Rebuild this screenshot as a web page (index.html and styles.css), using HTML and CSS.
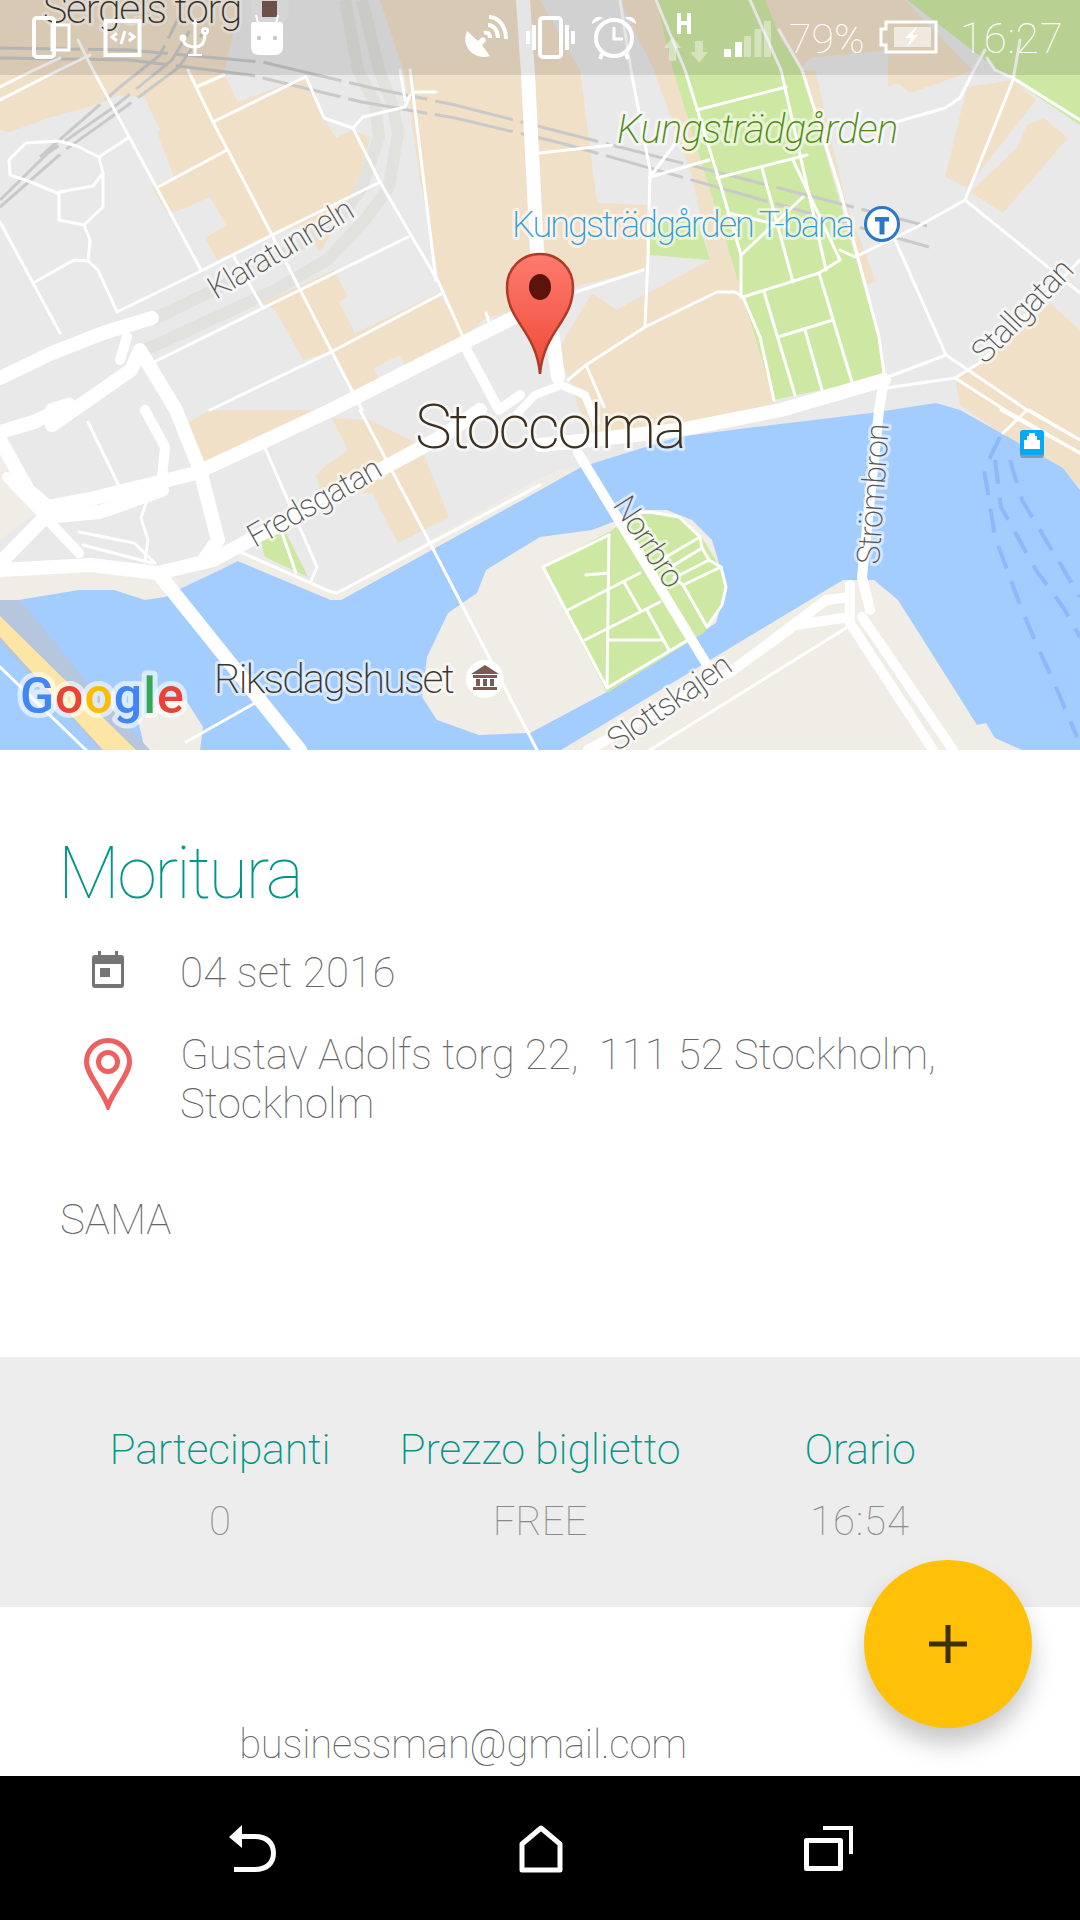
FILE: index.html
```html
<!DOCTYPE html>
<html lang="it">
<head>
<meta charset="utf-8">
<title>Moritura</title>
<link rel="stylesheet" href="styles.css">
</head>
<body>
<main class="screen">
  <section class="map">
    <svg class="map-art" viewBox="0 0 1080 750" width="1080" height="750">
      <defs>
        <linearGradient id="pinfill" x1="0" y1="0" x2="0" y2="1">
          <stop offset="0" stop-color="#fd7b6e"/>
          <stop offset="1" stop-color="#ee4a35"/>
        </linearGradient>
      </defs>
      <rect class="land" width="1080" height="750"/>
      <!-- buildings -->
      <g class="tan">
        <polygon points="0,0 240,0 224,75 133,72 145,98 120,95 96,105 48,118 10,132 0,130"/>
        <polygon points="133,70 189,70 224,75 238,102 305,77 325,120 336,138 353,130 370,137 362,170 344,213 320,252 300,225 272,235 217,260 205,238 226,225 210,197 181,210 167,213 152,187 174,177 165,153 157,132 160,130 145,98"/>
        <polygon points="262,303 334,270 348,297 339,302 355,333 439,293 463,337 406,368 399,355 374,368 380,382 355,393 331,352 303,360 275,310"/>
        <polygon points="184,425 196,468 344,410 210,410"/>
        <polygon points="332,418 348,450 329,463 316,475 320,490 372,493 398,543 449,517 420,445 370,420"/>
        <polygon points="380,0 540,0 580,70 597,203 648,205 650,255 643,270 574,287 540,300 510,312 486,318 463,337 440,283 420,180 405,75"/>
        <polygon points="540,0 656,0 673,70 743,297 710,260 692,177 654,70 620,0"/>
        <polygon points="556,353 592,293 616,310 710,260 741,290 775,403 680,432 590,445 570,380"/>
        <polygon points="802,70 815,70 846,203 876,282 865,285 840,190"/>
        <polygon points="750,0 905,0 972,70 953,78 910,93 898,83 888,87 888,50 810,58 800,70 778,63"/>
        <polygon points="967,87 1013,80 1036,100 967,188 945,177"/>
        <polygon points="1044,118 1068,138 1003,213 970,192 1017,148 1027,125"/>
        <polygon points="955,378 984,360 1022,330 1050,303 1080,330 1080,488 1063,468 1001,433 960,405"/>
      </g>
      <!-- park north -->
      <g class="park">
        <polygon points="656,0 765,0 781,40 802,70 881,347 884,373 853,383 822,390 797,395 774,400 743,297 673,70"/>
        <polygon points="650,222 698,220 710,260 650,255"/>
        <polygon points="907,0 1080,0 1080,125 998,70"/>
      </g>
      <!-- water and shores -->
      <polygon class="shore" points="0,440 30,490 48,505 0,540"/>
      <polygon class="shore" points="0,575 91,565 158,573 182,580 165,597 145,600 114,590 79,590 0,603"/>
      <polygon class="water" points="0,603 79,590 114,590 145,600 165,597 182,588 220,570 238,561 331,600 341,600 540,490 581,467 678,437 747,428 871,413 936,403 960,410 1001,433 1063,468 1080,490 1080,750 0,750"/>
      <polygon class="shore" points="238,550 331,590 341,590 540,478 560,470 581,467 540,490 341,600 331,600 238,561"/>
      <polygon class="shore" points="561,750 843,580 874,580 898,600 977,725 986,723 995,738 1022,750"/>
      <polygon class="shore" points="540,537 592,530 626,517 640,510 667,510 692,520 712,540 726,587 716,623 605,693 530,733 479,735 437,720 422,697 427,657 448,613 477,593 486,570"/>
      <polygon class="shore" points="138,720 165,700 186,700 203,727 200,750 145,750"/>
      <polygon class="highway-edge" points="0,600 20,600 85,680 150,750 0,750"/>
      <polygon class="water" points="0,642 100,750 0,750"/>
      <polygon class="highway" points="0,616 136,750 103,750 0,637"/>
      <!-- parks on the water side -->
      <polygon class="park-fill" points="542,567 609,532 638,512 678,517 702,538 722,570 726,587 722,607 705,632 607,693"/>
      <polygon class="park-fill" points="260,538 286,533 308,577 265,557"/>
      <!-- tunnel and rails -->
      <g class="tunnel">
        <polyline points="345,0 358,70 375,103 379,137 362,187 344,213 303,243 241,277 152,320"/>
        <polyline points="362,0 379,70 393,107 398,133 389,187 365,220 327,260 275,290 145,350"/>
      </g>
      <g class="rail">
        <polyline points="0,48 130,50 262,62 372,88 455,105 561,132 927,226"/>
        <polyline points="0,58 130,60 250,75 362,102 455,118 561,143 929,247"/>
        <polyline points="0,200 48,153 114,107 172,60 190,30"/>
        <polyline points="0,207 65,150 124,108 178,68 205,30"/>
        <polyline points="40,157 120,87 160,55 180,15"/>
      </g>
      <!-- large streets -->
      <g class="road-xl">
        <polyline points="523,0 528,75 537,250 548,300 558,377"/>
        <polyline points="0,378 52,353 103,333 152,318"/>
        <polyline points="52,425 131,370 140,350 176,410 200,470 218,540 205,558"/>
        <polyline points="0,432 34,422 69,405 52,410"/>
        <polyline points="523,313 463,343 331,410 196,473 86,500 48,507 28,490 0,440"/>
        <polyline points="0,563 45,517 100,512 162,490"/>
        <polyline points="0,570 91,565 158,573 213,560 441,437 480,410"/>
        <polyline points="540,445 590,440 679,430 781,410 884,380"/>
        <polyline points="158,573 300,750"/>
      </g>
      <g class="road-l">
        <polyline points="463,343 499,410 520,395"/>
        <polyline points="127,337 120,360"/>
        <polyline points="145,410 165,447 162,478"/>
        <polyline points="7,477 79,553"/>
        <polyline points="884,380 879,410 862,577 870,610"/>
        <polyline points="578,453 712,673"/>
        <polyline points="588,750 733,670 826,600 850,597"/>
        <polyline points="733,670 795,625 850,617"/>
        <polyline points="862,617 953,750"/>
        <polyline points="848,620 933,750"/>
        <polyline points="850,585 850,620"/>
      </g>
      <polyline class="ring" points="516,415 535,395 561,385 585,395 597,425"/>
      <!-- minor streets -->
      <g class="road">
        <polyline points="78,40 93,70 201,270"/>
        <polyline points="188,70 213,122 272,235 332,352 362,410"/>
        <polyline points="353,128 380,182 439,283 463,337"/>
        <polyline points="306,77 324,118 353,128 363,117 405,107 410,95"/>
        <polyline points="410,70 415,110 436,280"/>
        <polyline points="400,70 405,100"/>
        <polyline points="413,92 436,92"/>
        <polyline points="213,122 305,77"/>
        <polyline points="196,87 224,75"/>
        <polyline points="158,187 227,150"/>
        <polyline points="117,312 203,270 272,235 380,182"/>
        <polyline points="152,363 263,308 300,290 408,237"/>
        <polyline points="234,257 263,308"/>
        <polyline points="210,410 331,352 441,294"/>
        <polyline points="486,313 489,322"/>
        <polyline points="0,222 33,283 60,333"/>
        <polyline points="33,283 74,260 88,261 98,270 117,312"/>
        <polyline points="88,261 90,240 84,225 59,220 59,192 93,186 103,173 103,207 84,225"/>
        <polyline points="59,194 31,182 10,175 9,160 26,143 59,141 77,146 99,157 103,173"/>
        <polyline points="99,157 128,138"/>
        <polyline points="0,87 34,70 60,58"/>
        <polyline points="0,100 59,70 90,55"/>
        <polyline points="573,293 643,270"/>
        <polyline points="620,0 631,70 650,170 648,257 645,327"/>
        <polyline points="568,380 586,365 645,327 717,292 735,292 743,297 760,337 774,400"/>
        <polyline points="586,365 604,407"/>
        <polyline points="896,122 945,108 960,98 974,70 985,50"/>
        <polyline points="895,240 946,355"/>
        <polyline points="840,250 855,257 917,227 965,200 1013,80 1020,40"/>
        <polyline points="965,200 1080,293"/>
        <polyline points="946,355 888,377"/>
        <polyline points="946,355 1027,410 1080,440"/>
        <polyline points="886,388 955,378 1005,410 1080,453"/>
        <polyline points="955,378 981,362 1080,260"/>
        <polyline points="995,70 1013,78 1080,120"/>
        <polyline points="987,58 995,70"/>
        <polyline points="1027,410 1003,433"/>
        <polyline points="540,153 612,145"/>
        <polyline points="650,177 709,160"/>
        <polyline points="650,177 674,145"/>
        <polyline points="802,70 840,190 879,337 884,373"/>
        <polyline points="779,30 802,70"/>
        <polyline points="750,0 781,70"/>
        <polyline points="88,422 121,490"/>
        <polyline points="148,497 141,518 148,540 145,560"/>
        <polyline points="79,532 134,543 155,563"/>
        <polyline points="83,545 152,563"/>
        <polyline points="265,448 317,567 310,583"/>
        <polyline points="360,410 430,543 537,750"/>
        <polyline points="236,550 331,592 337,593 540,485"/>
        <polyline points="0,667 86,750"/>
        <polyline points="186,742 255,703"/>
        <polyline points="650,750 846,628"/>
        <polyline points="1001,410 1080,453"/>
        <polyline points="1029,410 1080,440"/>
      </g>
      <g class="park-paths">
        <polyline points="656,0 685,70 719,180 741,255 741,297"/>
        <polyline points="697,110 786,87"/>
        <polyline points="781,70 826,270"/>
        <polyline points="717,178 807,155"/>
        <polyline points="762,168 793,282"/>
        <polyline points="793,160 840,260"/>
        <polyline points="743,297 819,273 840,260"/>
        <polyline points="764,292 795,395"/>
        <polyline points="819,273 852,382"/>
        <polyline points="778,337 833,320"/>
        <polyline points="805,330 822,390"/>
        <polyline points="728,213 788,227"/>
        <polyline points="741,255 803,197"/>
        <polyline points="282,533 296,573"/>
        <polyline points="543,567 609,535"/>
        <polyline points="543,567 607,688 688,640"/>
        <polyline points="607,688 609,535"/>
        <polyline points="568,610 640,573"/>
        <polyline points="585,640 660,602"/>
        <polyline points="609,640 662,640"/>
        <polyline points="624,582 640,610"/>
        <polyline points="647,610 669,650"/>
        <polyline points="586,575 607,573"/>
        <polyline points="669,565 638,513 650,512 679,517 700,537 702,548 709,560 721,567 726,587 722,605 707,627 683,585 674,578"/>
        <polyline points="666,557 700,537"/>
        <polyline points="669,568 702,548"/>
        <polyline points="674,578 709,560"/>
        <polyline points="683,585 721,567"/>
      </g>
      <g class="ferry-route">
        <polyline points="1000,437 984,470 988,493 995,537 1022,610 1039,650 1053,680 1077,737"/>
        <polyline points="995,460 1001,507 1036,570 1063,607 1080,637"/>
        <polyline points="1010,460 1022,500 1080,597"/>
      </g>
      <!-- labels -->
      <text class="lbl lbl-sergels" x="43" y="23">Sergels torg</text>
      <text class="lbl lbl-park" x="617" y="143">Kungsträdgården</text>
      <text class="lbl lbl-transit" x="512" y="237">Kungsträdgården T-bana</text>
      <text class="lbl lbl-road" transform="translate(216 300) rotate(-31)">Klaratunneln</text>
      <text class="lbl lbl-road" transform="translate(985 365) rotate(-46)">Stallgatan</text>
      <text class="lbl lbl-city" x="415" y="448">Stoccolma</text>
      <text class="lbl lbl-road" transform="translate(255 548) rotate(-29.5)">Fredsgatan</text>
      <text class="lbl lbl-road" transform="translate(612 505) rotate(57)">Norrbro</text>
      <text class="lbl lbl-road" transform="translate(879 565) rotate(-86)">Strömbron</text>
      <text class="lbl lbl-road" transform="translate(617 752) rotate(-35)">Slottskajen</text>
      <text class="lbl lbl-place" x="214" y="693">Riksdagshuset</text>
      <text class="google" x="20" y="713"><tspan class="g-blue">G</tspan><tspan class="g-red">o</tspan><tspan class="g-yellow">o</tspan><tspan class="g-blue">g</tspan><tspan class="g-green">l</tspan><tspan class="g-red">e</tspan></text>
      <!-- poi icons -->
      <circle class="halo" cx="270" cy="8" r="19"/>
      <rect class="poi-brown" x="262" y="1" width="15" height="16"/>
      <circle class="tbadge" cx="882" cy="224" r="16.500"/>
      <path class="tbadge-t" d="M875 217h14v4.500h-4.500v13h-5v-13h-4.500z"/>
      <circle class="halo-solid" cx="485" cy="679" r="19"/>
      <path class="poi-brown" d="M485 665l14 9h-28zM473 675h24v3h-24zM476 679h4v7h-4zM483 679h4v7h-4zM490 679h4v7h-4zM473 687h24v3h-24z"/>
      <rect class="ferry-shadow" x="1020" y="433" width="24" height="25" rx="3"/>
      <rect class="ferry" x="1020" y="430" width="24" height="25" rx="3"/>
      <path class="ferry-mark" d="M1029 433h6v3h2v4h3v9h-16v-9h3v-4h2z"/>
      <!-- marker -->
      <path class="pin" d="M540 374C536 330 507 322 507 287C507 268 522 254 540 254C558 254 573 268 573 287C573 322 544 330 540 374Z"/>
      <ellipse class="pin-dot" cx="540" cy="287" rx="11" ry="13"/>
    </svg>

    <div class="statusbar">
      <svg class="status-icons-left" viewBox="0 0 300 75" width="300" height="75">
        <rect class="si" x="34" y="18" width="20" height="39" rx="3"/>
        <rect class="si-thin" x="52" y="25" width="17" height="25"/>
        <rect class="si" x="105.500" y="21" width="34" height="34"/>
        <path class="si-thin" d="M117 33l-5 4 5 4M129 33l5 4-5 4M125 31l-4 13"/>
        <path class="si-thin" d="M195 55V22M195 47c-8 0-12-4-12-8M195 47c8 0 10-6 10-14"/>
        <circle class="si-fill" cx="183" cy="38" r="3.500"/>
        <path class="si-fill" d="M195 19l3 5h-6zM188 54h14v2h-14z"/>
        <circle class="si-thin" cx="205" cy="31" r="2.500"/>
        <path class="si-fill" d="M251 25c0-2 1-3 3-3h26c2 0 3 1 3 3v22c0 5-3 8-8 8h-16c-5 0-8-3-8-8z"/>
        <path class="si-ant" d="M258 23l-2-8M276 23l2-8"/>
        <circle class="si-eye" cx="259" cy="38" r="2.200"/>
        <circle class="si-eye" cx="275" cy="38" r="2.200"/>
      </svg>
      <div class="status-right">
        <svg class="status-icons-mid" viewBox="460 0 320 75" width="320" height="75">
          <path class="si-fill" d="M470 31c-3 8-2 14 3 20 6 6 13 7 20 5l-8-11 4-4c0-3-3-5-5-3l-3 3z"/>
          <path class="si-arc" d="M487 33c3-1 6 0 6 5M491 25c5 0 10 5 10 13M492 17c10 0 17 10 17 22"/>
          <rect class="si" x="543" y="18" width="21" height="39" rx="3"/>
          <path class="si" d="M537 25v25M531 31v13M570 25v25M576 31v13"/>
          <circle class="si" cx="617" cy="38" r="18"/>
          <path class="si-thin" d="M617 27v12h9"/>
          <path class="si-fill" d="M595 24c0-6 7-9 11-6zM639 24c0-6-7-9-11-6z"/>
          <path class="si" d="M605 54l-2 5M629 54l2 5"/>
          <path class="si-fill" d="M680 13h4v8h6v-8h4v21h-4v-9h-6v9h-4z"/>
          <path class="si-dim" d="M676 38l-9 11h5v13h7v-13h5zM698 42v11h-5l9 11 9-11h-5v-11z" transform="translate(0 -1)"/>
          <rect class="si-fill" x="727" y="49" width="7" height="8"/>
          <rect class="si-fill" x="738" y="42" width="7" height="15"/>
          <rect class="si-dim" x="747" y="36" width="7" height="21"/>
          <rect class="si-dim" x="757.500" y="29" width="7" height="28"/>
          <rect class="si-dim" x="767" y="21" width="7" height="36"/>
        </svg>
        <span class="status-text status-pct">79%</span>
        <svg class="status-battery" viewBox="0 0 60 34" width="60" height="34">
          <path class="si-bat" d="M7 2h50v30H7v-7H2V9h5z"/>
          <rect class="si-bat-fill" x="15" y="7" width="37" height="20"/>
          <path class="si-fill" d="M36 9l-11 11h6l-4 9 11-12h-6l5-8z" transform="translate(1 -2)"/>
        </svg>
        <span class="status-text status-time">16:27</span>
      </div>
    </div>
  </section>

  <section class="details">
    <h1 class="title">Moritura</h1>
    <div class="info-row info-date">
      <svg class="info-icon icon-cal" viewBox="0 0 32 37" width="32" height="37">
        <path class="cal" fill-rule="evenodd" d="M6 0h3v4h14v-4h3v4h3a3 3 0 0 1 3 3v27a3 3 0 0 1-3 3H3a3 3 0 0 1-3-3V7a3 3 0 0 1 3-3h3zM3 13v20h26V13zM8 17h10v9H8z"/>
      </svg>
      <span class="info-text">04 set 2016</span>
    </div>
    <div class="info-row info-address">
      <svg class="info-icon icon-loc" viewBox="0 0 48 72" width="48" height="72">
        <path class="loc" d="M24 68C17 50 2.500 36 2.500 24A21.500 21.500 0 0 1 45.500 24C45.500 36 31 50 24 68Z"/>
        <circle class="loc" cx="24" cy="24" r="9.500"/>
      </svg>
      <span class="info-text">Gustav Adolfs torg 22,&nbsp; 111 52 Stockholm, Stockholm</span>
    </div>
    <p class="desc">SAMA</p>
  </section>

  <section class="stats">
    <div class="stat"><span class="stat-label">Partecipanti</span><span class="stat-value">0</span></div>
    <div class="stat"><span class="stat-label">Prezzo biglietto</span><span class="stat-value">FREE</span></div>
    <div class="stat"><span class="stat-label">Orario</span><span class="stat-value stat-time">16:54</span></div>
  </section>

  <section class="contact">
    <span class="email">businessman@gmail.com</span>
  </section>

  <button class="fab" type="button" aria-label="Aggiungi">
    <svg viewBox="0 0 40 40" width="40" height="40"><path class="fab-plus" d="M20 1v38M1 20h38"/></svg>
  </button>

  <nav class="navbar">
    <svg viewBox="0 0 50 48" width="50" height="48"><path class="nav-fill" d="M1 12L14 0v9h13c13 0 21 7 21 19s-8 19-21 19H6v-5h21c9 0 16-5 16-14s-7-14-16-14H14v9z"/></svg>
    <svg viewBox="0 0 50 48" width="50" height="48"><path class="nav-line" d="M25 3L6 19v26h38V19z"/></svg>
    <svg viewBox="0 0 50 48" width="50" height="48"><rect class="nav-line" x="3.500" y="15.500" width="34" height="28"/><path class="nav-thin" d="M20 3h28v26"/></svg>
  </nav>
</main>
</body>
</html>
```
FILE: styles.css
```css
* { box-sizing: border-box; }
html, body { margin: 0; padding: 0; }
body { background: #fff; font-family: Roboto, "Liberation Sans", sans-serif; font-weight: 100; }
.screen { position: relative; width: 1080px; height: 1920px; overflow: hidden; display: flex; flex-direction: column; background: #fff; }

.map { position: relative; height: 750px; flex: none; }
.map-art { display: block; }
.land { fill: #e9e9e9; }
.tan polygon { fill: #f0e0c8; }
.park polygon, .park-fill { fill: #cde8a2; }
.water { fill: #a3ccff; }
.shore { fill: #efede6; }
.highway { fill: #fde5a6; }
.highway-edge { fill: #b6c6dc; }
.tunnel polyline { fill: none; stroke: #e1e1dd; stroke-width: 12; stroke-linejoin: round; }
.rail polyline { fill: none; stroke: #c9c9c9; stroke-width: 3; stroke-dasharray: 80 8; }
.road polyline, .road-l polyline, .road-xl polyline, .park-paths polyline { fill: none; stroke: #fff; stroke-linejoin: round; stroke-linecap: round; }
.road polyline { stroke-width: 3; }
.road-l polyline { stroke-width: 10; }
.road-xl polyline { stroke-width: 14; }
.park-paths polyline { stroke-width: 3; }
.ring { fill: none; stroke: #fff; stroke-width: 8; stroke-linejoin: round; }
.ferry-route polyline { fill: none; stroke: #8db8fb; stroke-width: 4; stroke-dasharray: 24 14; }

.lbl { font-family: Roboto, "Liberation Sans", sans-serif; font-weight: 200; paint-order: stroke; stroke: rgba(255,255,255,.55); stroke-width: 6px; stroke-linejoin: round; }
.lbl-sergels { font-size: 41px; fill: #3b352c; letter-spacing: -1.2px; }
.lbl-place { font-size: 41px; fill: #3b352c; letter-spacing: -1.800px; }
.lbl-city { font-size: 62px; fill: #3b3020; letter-spacing: -2.200px; }
.lbl-park { font-size: 40px; fill: #4f8a10; font-style: italic; letter-spacing: -.7px; }
.lbl-transit { font-size: 36px; fill: #2f9bd8; letter-spacing: -1.950px; }
.lbl-road { font-size: 32px; fill: #555; letter-spacing: -1px; }
.google { font-family: Roboto, sans-serif; font-size: 50px; font-weight: 500; paint-order: stroke; stroke: rgba(255,255,255,.6); stroke-width: 10px; stroke-linejoin: round; letter-spacing: 1px; }
.g-blue { fill: #4285f4; }
.g-red { fill: #ea4335; }
.g-yellow { fill: #fbbc05; }
.g-green { fill: #34a853; }
.halo { fill: #eee; }
.halo-solid { fill: #fff; }
.poi-brown { fill: #7a5b52; }
.tbadge { fill: #fff; stroke: #2a78c7; stroke-width: 3; }
.tbadge-t { fill: #2a78c7; }
.ferry { fill: #03a9f4; }
.ferry-shadow { fill: #8a97a8; }
.ferry-mark { fill: #fff; }
.pin { fill: url(#pinfill); stroke: #b03a28; stroke-width: 2.500; }
.pin-dot { fill: #5b130b; }

.statusbar { position: absolute; left: 0; top: 0; width: 1080px; height: 75px; background: rgba(0,0,0,.1); display: flex; justify-content: space-between; }
.status-icons-left, .status-icons-mid, .status-battery { display: block; flex: none; }
.status-right { display: flex; align-items: flex-start; }
.status-text { font-size: 41px; line-height: 40px; color: #fff; font-weight: 100; padding-top: 19px; }
.status-pct { width: 90px; margin-left: 12px; }
.status-battery { margin-top: 20px; }
.status-time { width: 120px; margin-left: 21px; font-size: 42px; letter-spacing: .8px; }
.si { fill: none; stroke: #fff; stroke-width: 4; }
.si-thin { fill: none; stroke: #fff; stroke-width: 3; }
.si-fill { fill: #fff; }
.si-arc { fill: none; stroke: #fff; stroke-width: 4; }
.si-ant { fill: none; stroke: #fff; stroke-width: 2; }
.si-eye { fill: #c9c9c9; }
.si-dim { fill: rgba(255,255,255,.4); }
.si-bat { fill: none; stroke: #fff; stroke-width: 3; }
.si-bat-fill { fill: rgba(255,255,255,.6); }

.details { flex: none; height: 607px; padding: 82px 60px 0; color: #777; }
.title { margin: 0 0 0 -2px; font-size: 72px; line-height: 84px; font-weight: 100; color: #009688; letter-spacing: -2.500px; }
.info-row { display: flex; }
.info-icon { flex: none; display: block; }
.info-date { margin-top: 26px; align-items: center; height: 60px; }
.icon-cal { margin-left: 32px; margin-right: 8px; margin-top: -6px; }
.info-address { margin-top: 28px; align-items: flex-start; }
.icon-loc { margin-left: 24px; margin-top: 8px; }
.cal { fill: #757575; }
.loc { fill: none; stroke: #ef5f5f; stroke-width: 5; }
.info-text { display: block; margin-left: 48px; font-size: 42px; line-height: 49px; color: #666; }
.info-date .info-text { letter-spacing: .2px; }
.info-address .info-text { width: 760px; }
.desc { margin: 67px 0 0; font-size: 42px; line-height: 49px; color: #666; }

.stats { flex: none; height: 250px; background: #ededed; display: grid; grid-template-columns: repeat(3, 320px); padding: 66px 60px 0; }
.stat { display: flex; flex-direction: column; align-items: center; }
.stat-label { font-size: 43px; line-height: 52px; color: #009688; font-weight: 200; letter-spacing: -.25px; }
.stat-value { font-size: 40px; line-height: 50px; margin-top: 22px; color: #8a8a8a; }
.stat-time { letter-spacing: 1px; }

.contact { flex: 1; padding: 114px 214px 0 60px; display: flex; justify-content: center; align-items: flex-start; }
.email { font-size: 40px; line-height: 48px; color: #666; letter-spacing: -.2px; }

.fab { position: absolute; left: 864px; top: 1560px; width: 168px; height: 168px; border-radius: 50%; border: 0; padding: 0; background: #ffc107; box-shadow: 0 16px 24px rgba(0,0,0,.22); display: flex; align-items: center; justify-content: center; }
.fab-plus { fill: none; stroke: #3f3000; stroke-width: 5; }

.navbar { flex: none; height: 144px; background: #000; display: flex; justify-content: space-between; padding: 49px 227px 0 228px; }
.navbar svg { display: block; }
.nav-fill { fill: #fff; }
.nav-line { fill: none; stroke: #fff; stroke-width: 5; stroke-linejoin: round; }
.nav-thin { fill: none; stroke: #fff; stroke-width: 4; }
```
